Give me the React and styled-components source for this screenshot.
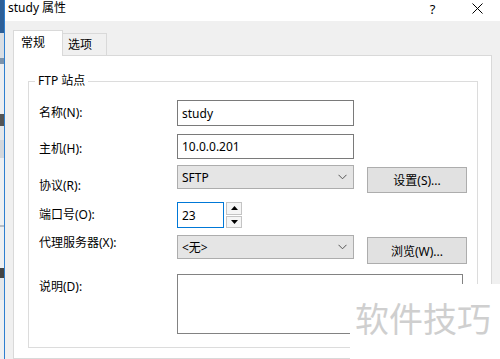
import styled, { createGlobalStyle } from "styled-components";

const GlobalStyle = createGlobalStyle`
  html, body {
    margin: 0;
    padding: 0;
    background: #f0f0f0;
  }
  body {
    font-family: "Noto Sans", "Noto Sans CJK SC", sans-serif;
    font-size: 12px;
    color: #000;
  }
`;

const Chevron = () => (
  <svg width="9" height="6" viewBox="0 0 9 6">
    <polyline points="0.5,0.8 4.5,4.8 8.5,0.8" fill="none" stroke="#555" strokeWidth="1" />
  </svg>
);

const Arrow = ({ up }) => (
  <svg width="7" height="4" viewBox="0 0 7 4">
    <polygon points={up ? "3.5,0 7,4 0,4" : "0,0 7,0 3.5,4"} fill="#000" />
  </svg>
);

const App = () => {
  return (
    <Window>
      <GlobalStyle />
      <Strip />
      <Dialog>
        <TitleBar>
          <Title>study 属性</Title>
          <CaptionButton>?</CaptionButton>
          <CaptionButton>
            <svg width="11" height="11" viewBox="0 0 11 11">
              <path d="M0.5 0.5 L10.5 10.5 M10.5 0.5 L0.5 10.5" stroke="#000" strokeWidth="1" />
            </svg>
          </CaptionButton>
        </TitleBar>
        <Body>
          <TabRow>
            <Tab active>常规</Tab>
            <Tab>选项</Tab>
          </TabRow>
          <Panel>
            <GroupBox>
              <Legend>FTP 站点</Legend>
              <GroupBody>
                <Row h={26}>
                  <Label offset={5}>名称(N):</Label>
                  <TextBox h={26}>study</TextBox>
                </Row>
                <Row h={25} gap={8}>
                  <Label offset={7}>主机(H):</Label>
                  <TextBox h={25}>10.0.0.201</TextBox>
                </Row>
                <Row h={28} gap={6}>
                  <Label offset={13}>协议(R):</Label>
                  <Dropdown>
                    <span>SFTP</span>
                    <Chevron />
                  </Dropdown>
                  <Button h={26}>设置(S)...</Button>
                </Row>
                <Row h={26} gap={9}>
                  <Label offset={5}>端口号(O):</Label>
                  <NumberBox>23</NumberBox>
                  <Spinner>
                    <SpinButton>
                      <Arrow up />
                    </SpinButton>
                    <SpinButton>
                      <Arrow />
                    </SpinButton>
                  </Spinner>
                </Row>
                <Row h={29} gap={7}>
                  <Label offset={0}>代理服务器(X):</Label>
                  <Dropdown>
                    <span>&lt;无&gt;</span>
                    <Chevron />
                  </Dropdown>
                  <Button h={27}>浏览(W)...</Button>
                </Row>
                <Row h={60} gap={10}>
                  <Label offset={5}>说明(D):</Label>
                  <TextArea />
                </Row>
              </GroupBody>
            </GroupBox>
          </Panel>
        </Body>
      </Dialog>
      <Watermark>软件技巧</Watermark>
    </Window>
  );
};

export default App;

const Window = styled.div`
  position: relative;
  width: 500px;
  height: 359px;
  display: flex;
  overflow: hidden;
`;

const Strip = styled.div`
  width: 4px;
  flex-shrink: 0;
  background: linear-gradient(
    to bottom,
    #2d5f98 0 33px,
    #d9dee4 33px 58px,
    #7d93ab 58px 64px,
    #eceef1 64px 114px,
    #555 114px 126px,
    #e4e7ea 126px 140px,
    #d3d7dc 140px 158px,
    #eef0f2 158px 225px,
    #b8bec6 225px 227px,
    #eef0f2 227px 268px,
    #444 268px 278px,
    #e4e7ea 278px 300px,
    #eef0f2 300px
  );
`;

const Dialog = styled.div`
  flex: 1;
  display: flex;
  flex-direction: column;
  border-left: 1px solid #2e7fd0;
  background: #f0f0f0;
`;

const TitleBar = styled.div`
  height: 21px;
  flex-shrink: 0;
  display: flex;
  align-items: flex-start;
  background: #fff;
  padding-left: 3px;
`;

const Title = styled.div`
  flex: 1;
  line-height: 16px;
`;

const CaptionButton = styled.div`
  width: 45px;
  height: 21px;
  display: flex;
  justify-content: center;
  padding-top: 3px;
  box-sizing: border-box;
  font-size: 13px;
  line-height: 12px;
`;

const Body = styled.div`
  flex: 1;
  display: flex;
  flex-direction: column;
  padding: 9px 8px 0 8px;
`;

const TabRow = styled.div`
  display: flex;
  align-items: flex-end;
  height: 25px;
  flex-shrink: 0;
`;

const Tab = styled.div`
  position: relative;
  box-sizing: border-box;
  line-height: 16px;
  border: 1px solid #d9d9d9;
  border-bottom: none;
  ${(p) =>
    p.active
      ? `
    width: 50px;
    height: 26px;
    margin-bottom: -1px;
    padding: 4px 0 0 7px;
    background: #fff;
    z-index: 1;
  `
      : `
    width: 44px;
    height: 22px;
    padding: 3px 0 0 5px;
    border-left: none;
    background: #f0f0f0;
  `}
`;

const Panel = styled.div`
  flex: 1;
  background: #fff;
  border: 1px solid #d9d9d9;
  padding: 17px 13px 0 14px;
`;

const GroupBox = styled.fieldset`
  margin: 0;
  padding: 0;
  min-width: 0;
  border: 1px solid #dcdcdc;
`;

const Legend = styled.legend`
  margin-left: 6px;
  padding: 0 3px;
  line-height: 16px;
`;

const GroupBody = styled.div`
  padding: 11px 0 13px 10px;
`;

const Row = styled.div`
  display: flex;
  align-items: flex-start;
  height: ${(p) => p.h}px;
  margin-top: ${(p) => p.gap || 0}px;
`;

const Label = styled.div`
  width: 138px;
  flex-shrink: 0;
  line-height: 16px;
  padding-top: ${(p) => p.offset}px;
`;

const TextBox = styled.div`
  width: 177px;
  height: ${(p) => p.h}px;
  box-sizing: border-box;
  display: flex;
  align-items: center;
  padding: 0 4px;
  border: 1px solid #7a7a7a;
  background: #fff;
`;

const Dropdown = styled.div`
  width: 177px;
  height: 24px;
  box-sizing: border-box;
  display: flex;
  align-items: center;
  justify-content: space-between;
  padding: 0 6px 0 4px;
  border: 1px solid #adadad;
  background: #e5e5e5;
`;

const Button = styled.div`
  width: 100px;
  height: ${(p) => p.h}px;
  margin: 2px 0 0 13px;
  box-sizing: border-box;
  display: flex;
  align-items: center;
  justify-content: center;
  border: 1px solid #adadad;
  background: #e1e1e1;
`;

const NumberBox = styled.div`
  width: 47px;
  height: 26px;
  box-sizing: border-box;
  display: flex;
  align-items: center;
  padding: 0 4px;
  border: 1px solid #0078d7;
  background: #fff;
`;

const Spinner = styled.div`
  width: 16px;
  height: 26px;
  margin-left: 2px;
  display: flex;
  flex-direction: column;
  gap: 1px;
`;

const SpinButton = styled.div`
  flex: 1;
  display: flex;
  align-items: center;
  justify-content: center;
  border: 1px solid #c4c4c4;
  background: #f5f5f5;
`;

const TextArea = styled.div`
  width: 286px;
  height: 60px;
  box-sizing: border-box;
  border: 1px solid #828282;
  background: #fff;
`;

const Watermark = styled.div`
  position: absolute;
  left: 350px;
  top: 284px;
  right: 0;
  bottom: 0;
  background: #fff;
  padding: 17px 0 0 5px;
  font-family: "Noto Sans CJK SC", sans-serif;
  font-size: 34px;
  line-height: 34px;
  color: #cfcfcf;
  white-space: nowrap;
`;
